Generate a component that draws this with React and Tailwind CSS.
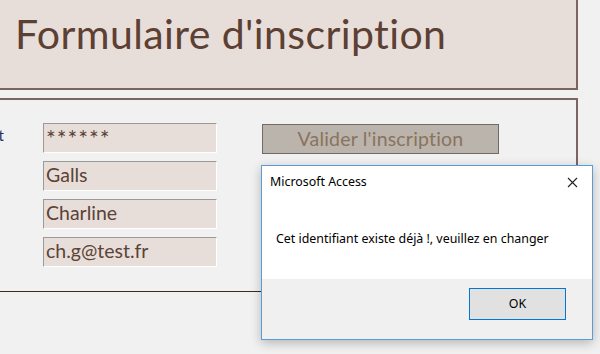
import React from "react";

const fields = ["******", "Galls", "Charline", "ch.g@test.fr"];

const Field = ({ value }) => (
  <div
    className={
      "h-[30px] w-[174px] bg-[#e8ded9] border-t border-l border-t-[#9a9a9a] border-l-[#9a9a9a] border-b border-r border-b-white border-r-white pl-[2px] text-[#5b4336] " +
      (value.startsWith("*") ? "text-[23px] leading-[28px] tracking-[1px]" : "text-[19.5px] leading-[26px]")
    }
  >
    {value}
  </div>
);

const Dialog = () => (
  <div className="absolute left-[261px] top-[165px] w-[332px] h-[175px] border border-[#5a9bd8] bg-white shadow-[0_3px_10px_rgba(0,0,0,0.25)] flex flex-col font-['Noto_Sans',sans-serif] text-black">
    <div className="flex items-center justify-between pl-[8px] pr-[14px] h-[32px] text-[12.4px]">
      <span>Microsoft Access</span>
      <svg width="11" height="11" viewBox="0 0 11 11" className="mt-[1px]">
        <path d="M1 1 L10 10 M10 1 L1 10" stroke="#222" strokeWidth="1.1" />
      </svg>
    </div>
    <div className="flex-1 flex items-center pl-[14px] pt-[2px] text-[12.4px]">
      Cet identifiant existe déjà !, veuillez en changer
    </div>
    <div className="h-[60px] bg-[#f0f0f0] flex justify-end items-start pt-[9px] pr-[26px]">
      <button className="w-[97px] h-[32px] border border-[#0078d7] bg-[#e1e1e1] text-[12.4px]">OK</button>
    </div>
  </div>
);

export default function App() {
  return (
    <div className="relative w-[600px] h-[354px] overflow-hidden bg-[#f1f1f1] font-['Lato',sans-serif]">
      <div className="-ml-[2px] -mt-[2px] w-[580px] h-[92px] bg-[#e8ded9] border-2 border-[#7b6560] pl-[15px] pt-[6px]">
        <h1 className="text-[41px] tracking-[0.4px] text-[#5b4033] leading-[56px]">Formulaire d'inscription</h1>
      </div>
      <div className="-ml-[2px] mt-[8px] w-[580px] h-[194px] border-t-2 border-r-2 border-[#7b6560] border-b border-b-[#3d2a22] flex pt-[23px]">
        <div className="w-[45px] shrink-0 pt-[1px] text-[15px] text-[#1f3355] flex justify-end">
          <span className="mr-[39px] whitespace-nowrap">Identifiant</span>
        </div>
        <div className="flex flex-col gap-[8px]">
          {fields.map((f) => (
            <Field key={f} value={f} />
          ))}
        </div>
        <div className="ml-[45px] pt-[1px]">
          <button className="w-[237px] h-[30px] bg-[#bab4ac] border border-[#6f6a66] text-[19.5px] tracking-[0.2px] text-[#8a735d] leading-[26px]">
            Valider l'inscription
          </button>
        </div>
      </div>
      <Dialog />
    </div>
  );
}
